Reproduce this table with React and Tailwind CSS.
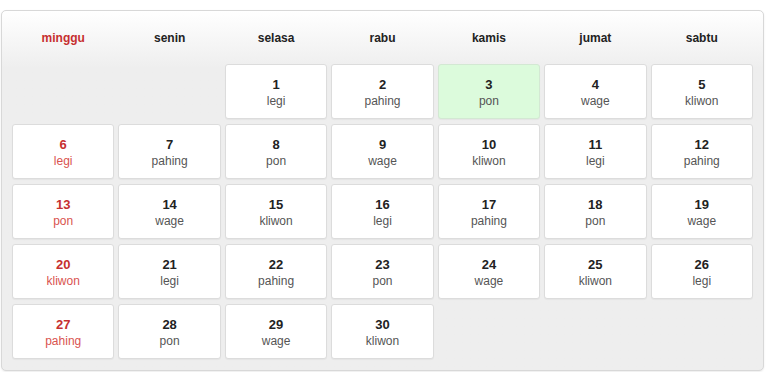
import React from "react";

const DAYS = ["minggu", "senin", "selasa", "rabu", "kamis", "jumat", "sabtu"];
const PASARAN = ["legi", "pahing", "pon", "wage", "kliwon"];

// month starts on selasa, 30 days, today = 3
const FIRST = 2;
const TOTAL = 30;
const TODAY = 3;

const Cell = ({ day, col }) => {
  const pasaran = PASARAN[(day - 1) % 5];
  const sunday = col === 0;
  const today = day === TODAY;
  return (
    <div
      className={`h-[55px] rounded-[3px] border pt-[12px] text-center leading-4 shadow-[0_1px_1px_rgba(0,0,0,0.04)] ${
        today ? "border-[#d3e8d3] bg-[#dcfbdc]" : "border-[#dcdcdc] bg-white"
      }`}
    >
      <div className={`text-[13px] font-bold ${sunday ? "text-[#c62f2f]" : "text-[#222]"}`}>
        {day}
      </div>
      <div className={`text-[12px] ${sunday ? "text-[#d9534f]" : "text-[#555]"}`}>{pasaran}</div>
    </div>
  );
};

export default function App() {
  const cells = [];
  for (let i = 0; i < FIRST; i++) cells.push(<div key={`e${i}`} className="h-[55px]" />);
  for (let d = 1; d <= TOTAL; d++) {
    cells.push(<Cell key={d} day={d} col={(FIRST + d - 1) % 7} />);
  }

  return (
    <div
      className="min-h-[372px] bg-white pt-[10px] pl-[1px]"
      style={{ fontFamily: '"Liberation Sans", Arial, sans-serif' }}
    >
      <div className="w-[763px] h-[361px] rounded-[5px] border border-[#d8d8d8] bg-[#eeeeee] bg-gradient-to-b from-white from-0% to-[#eeeeee] to-[16%] px-[10px] pt-[10px] shadow-[0_1px_2px_rgba(0,0,0,0.08)]">
        <div className="grid grid-cols-7 gap-x-[4px] h-[38px] pt-[9px]">
          {DAYS.map((d, i) => (
            <div
              key={d}
              className={`text-center text-[12px] font-bold leading-4 ${
                i === 0 ? "text-[#c62f2f]" : "text-[#222]"
              }`}
            >
              {d}
            </div>
          ))}
        </div>
        <div className="mt-[5px] grid grid-cols-7 gap-x-[4px] gap-y-[5px]">{cells}</div>
      </div>
    </div>
  );
}
